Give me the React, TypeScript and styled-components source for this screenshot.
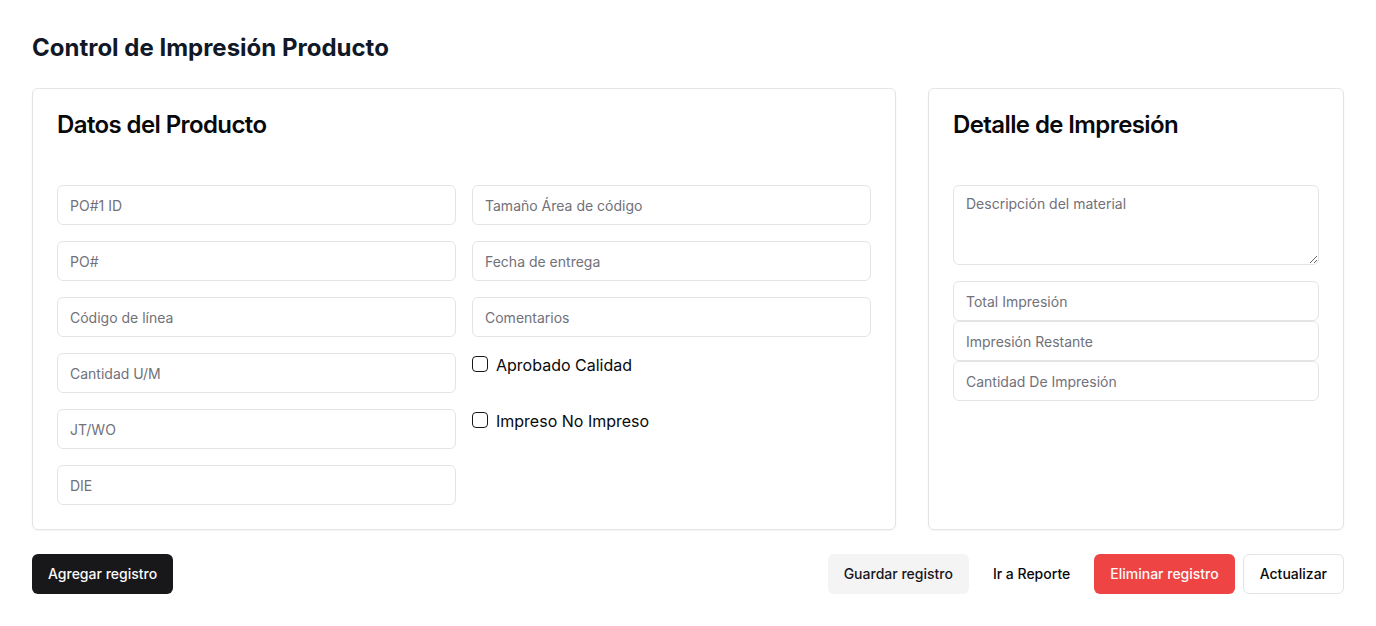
import React from 'react';
import styled, { createGlobalStyle, css } from 'styled-components';

const GlobalStyle = createGlobalStyle`
  *, *::before, *::after { box-sizing: border-box; }
  body {
    margin: 0;
    background: #ffffff;
    color: #09090b;
    font-family: Inter, sans-serif;
    font-size: 16px;
    line-height: 24px;
  }
  h1, h2 { margin: 0; }
`;

const Page = styled.main`
  padding: 32px;
`;

const PageTitle = styled.h1`
  margin-bottom: 24px;
  font-size: 24px;
  line-height: 32px;
  font-weight: 700;
  color: #111827;
`;

const Panels = styled.div`
  display: grid;
  grid-template-columns: repeat(3, minmax(0, 1fr));
  gap: 32px;
  margin-bottom: 24px;
`;

const Card = styled.section<{ $span?: number }>`
  grid-column: span ${({ $span = 1 }) => $span};
  padding: 24px;
  border: 1px solid #e4e4e7;
  border-radius: 6px;
  box-shadow: 0 1px 2px rgba(0, 0, 0, 0.05);
`;

const CardTitle = styled.h2`
  margin-bottom: 48px;
  font-size: 24px;
  line-height: 24px;
  font-weight: 600;
  letter-spacing: -0.025em;
`;

const ProductFields = styled.div`
  display: grid;
  grid-template-columns: repeat(2, minmax(0, 1fr));
  gap: 16px;
`;

const Column = styled.div<{ $gap?: number }>`
  display: flex;
  flex-direction: column;
  gap: ${({ $gap = 0 }) => $gap}px;
`;

const fieldStyle = css`
  display: block;
  width: 100%;
  padding: 8px 12px;
  border: 1px solid #e4e4e7;
  border-radius: 6px;
  background: #ffffff;
  color: inherit;
  font-family: inherit;
  font-size: 14px;
  line-height: 20px;

  &::placeholder { color: #71717a; opacity: 1; }
`;

const TextField = styled.input`
  ${fieldStyle}
  height: 40px;
`;

const TextArea = styled.textarea`
  ${fieldStyle}
  min-height: 80px;
`;

const CheckLabel = styled.label`
  display: flex;
  align-items: flex-start;
  gap: 8px;
  height: 40px;
`;

const CheckBox = styled.input`
  appearance: none;
  width: 16px;
  height: 16px;
  margin: 3px 0 0;
  border: 1px solid #18181b;
  border-radius: 4px;

  &:checked { background: #18181b; }
`;

const Actions = styled.footer`
  display: flex;
  flex-wrap: wrap;
  justify-content: space-between;
  gap: 8px;
`;

const ActionGroup = styled.div`
  display: flex;
  flex-wrap: wrap;
  gap: 8px;
`;

type Variant = 'primary' | 'secondary' | 'ghost' | 'danger' | 'outline';

const variants: Record<Variant, [string, string, string]> = {
  primary: ['#18181b', '#fafafa', 'none'],
  secondary: ['#f4f4f5', '#18181b', 'none'],
  ghost: ['transparent', '#09090b', 'none'],
  danger: ['#ef4444', '#fafafa', 'none'],
  outline: ['#ffffff', '#09090b', '1px solid #e4e4e7'],
};

const Button = styled.button<{ $variant: Variant }>`
  height: 40px;
  padding: 8px 16px;
  border: ${({ $variant }) => variants[$variant][2]};
  border-radius: 6px;
  background: ${({ $variant }) => variants[$variant][0]};
  color: ${({ $variant }) => variants[$variant][1]};
  font-family: inherit;
  font-size: 14px;
  line-height: 20px;
  font-weight: 500;
  white-space: nowrap;
  cursor: pointer;
`;

const productFields = ['PO#1 ID', 'PO#', 'Código de línea', 'Cantidad U/M', 'JT/WO', 'DIE'];
const extraFields = ['Tamaño Área de código', 'Fecha de entrega', 'Comentarios'];
const checks = ['Aprobado Calidad', 'Impreso No Impreso'];
const printFields = ['Total Impresión', 'Impresión Restante', 'Cantidad De Impresión'];

const Field = ({ name }: { name: string }) => (
  <TextField type="text" placeholder={name} aria-label={name} />
);

export default function App() {
  return (
    <>
      <GlobalStyle />
      <Page>
        <PageTitle>Control de Impresión Producto</PageTitle>
        <Panels>
          <Card $span={2}>
            <CardTitle>Datos del Producto</CardTitle>
            <ProductFields>
              <Column $gap={16}>
                {productFields.map((name) => <Field key={name} name={name} />)}
              </Column>
              <Column $gap={16}>
                {extraFields.map((name) => <Field key={name} name={name} />)}
                {checks.map((name) => (
                  <CheckLabel key={name}>
                    <CheckBox type="checkbox" />
                    {name}
                  </CheckLabel>
                ))}
              </Column>
            </ProductFields>
          </Card>
          <Card>
            <CardTitle>Detalle de Impresión</CardTitle>
            <Column $gap={16}>
              <TextArea placeholder="Descripción del material" aria-label="Descripción del material" />
              <Column>
                {printFields.map((name) => <Field key={name} name={name} />)}
              </Column>
            </Column>
          </Card>
        </Panels>
        <Actions>
          <Button type="button" $variant="primary">Agregar registro</Button>
          <ActionGroup>
            <Button type="button" $variant="secondary">Guardar registro</Button>
            <Button type="button" $variant="ghost">Ir a Reporte</Button>
            <Button type="button" $variant="danger">Eliminar registro</Button>
            <Button type="button" $variant="outline">Actualizar</Button>
          </ActionGroup>
        </Actions>
      </Page>
    </>
  );
}
